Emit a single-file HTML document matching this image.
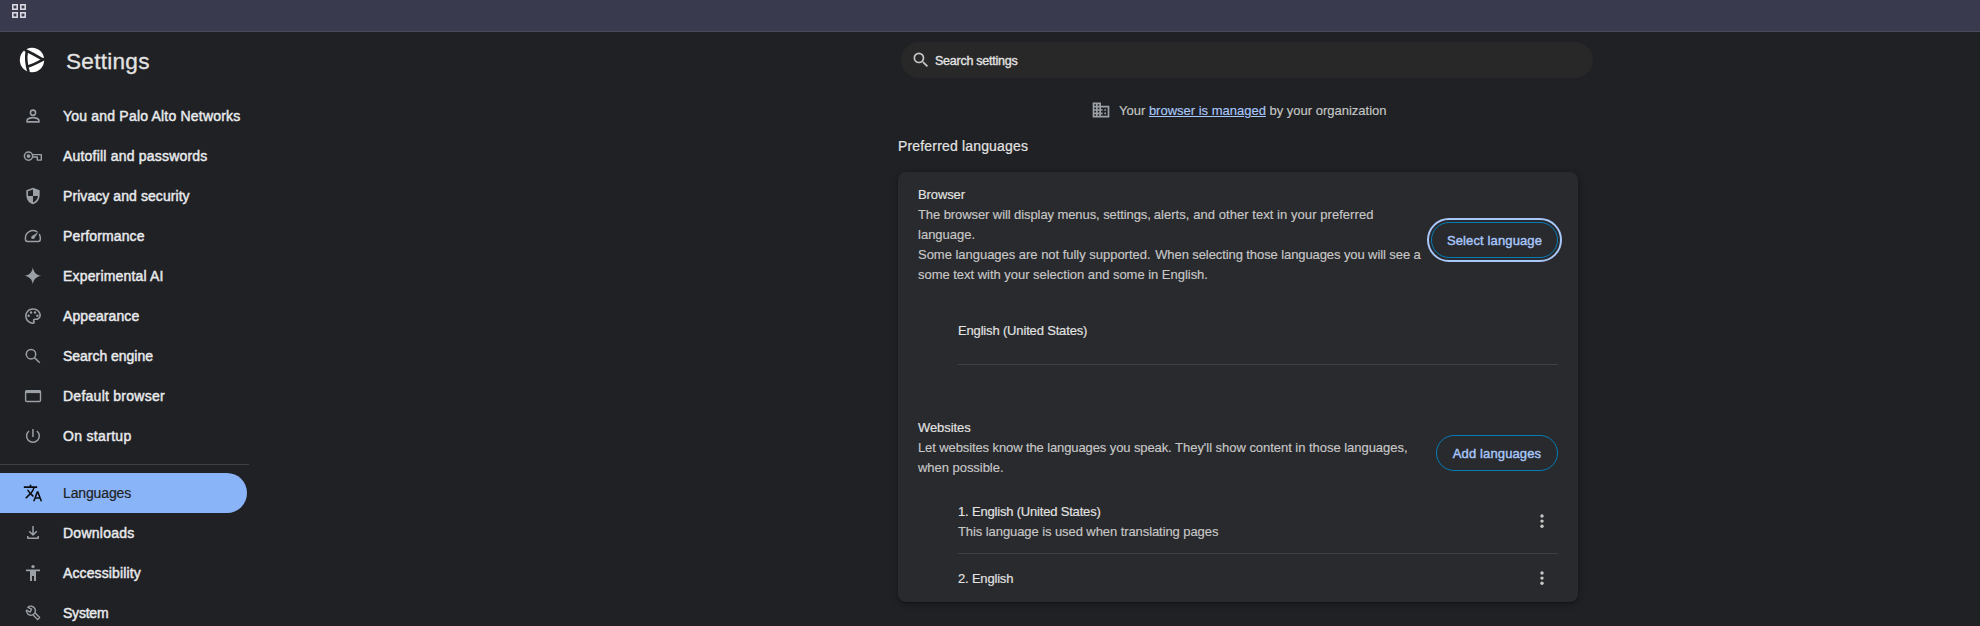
<!DOCTYPE html>
<html lang="en">
<head>
<meta charset="utf-8">
<title>Settings - Languages</title>
<style>
*{box-sizing:border-box;margin:0;padding:0}
html,body{width:1980px;height:626px;overflow:hidden;background:#202124}
body{position:relative;font-family:"Liberation Sans",sans-serif;font-size:13px;color:#e3e3e3;-webkit-font-smoothing:antialiased}
.abs{position:absolute}
.t{position:absolute;white-space:nowrap;line-height:20px;transform-origin:0 50%}
#topbar{left:0;top:0;width:1980px;height:32px;background:#3a3a4e;border-bottom:1px solid #4b4b58}
#toolbar h1{left:66px;top:46px;font-size:22.6px;line-height:32px;font-weight:400;color:#e3e3e3;-webkit-text-stroke:0.3px #e3e3e3}
.mi{position:absolute;left:0;width:247px;height:40px}
.mi svg{position:absolute;left:23px;top:10px;width:20px;height:20px;fill:#9aa0a6}
.mi span{position:absolute;left:63px;top:10px;line-height:20px;font-size:14px;font-weight:400;-webkit-text-stroke:0.45px #e8eaed;color:#e8eaed;white-space:nowrap}
.mi.sel{background:#8ab4f8;border-radius:0 20px 20px 0}
.mi.sel span{color:#202124;-webkit-text-stroke:0.2px #202124}
.mi.sel svg{fill:#0c0d10}
#sep{left:0;top:464px;width:249px;height:1px;background:#3c4043}
#search{left:901px;top:42px;width:692px;height:36px;border-radius:18px;background:#282828}
#search span{left:34px;top:9px;font-size:12.5px;font-weight:400;-webkit-text-stroke:0.35px #e3e3e3;color:#e3e3e3}
#managed{left:1119px;top:101px;color:#c4c7c5;font-size:13px;-webkit-text-stroke:0.15px}
#managed a{color:#a8c7fa;text-decoration:underline}
#pref{left:898px;top:136px;-webkit-text-stroke:0.2px #e3e3e3;font-size:14px;color:#e3e3e3}
#card{left:898px;top:172px;width:680px;height:430px;border-radius:8px;background:#292a2d;box-shadow:0 1px 2px 0 rgba(0,0,0,.3),0 2px 6px 2px rgba(0,0,0,.15)}
.c{color:#e3e3e3;-webkit-text-stroke:0.15px #e3e3e3}
.s{color:#c7c7c7;-webkit-text-stroke:0.15px #c7c7c7}
.hr{position:absolute;left:958px;width:600px;height:1px;background:#3f4042}
.btn{position:absolute;border:1px solid #047db7;border-radius:20px;color:#a8c7fa;font-weight:400;-webkit-text-stroke:0.4px #a8c7fa;font-size:13px;text-align:center;white-space:nowrap;letter-spacing:0.13px}
/*LS*/
#h1{letter-spacing:0.257px}
#m0{letter-spacing:0.201px}
#m1{letter-spacing:0.201px}
#m2{letter-spacing:0.071px}
#m3{letter-spacing:0.140px}
#m4{letter-spacing:0.169px}
#m5{letter-spacing:0.078px}
#m6{letter-spacing:-0.031px}
#m7{letter-spacing:0.257px}
#m8{letter-spacing:0.322px}
#m9{letter-spacing:-0.133px}
#m10{letter-spacing:0.248px}
#m11{letter-spacing:0.119px}
#m12{letter-spacing:-0.215px}
#stext{letter-spacing:-0.245px}
#managed{letter-spacing:-0.003px}
#pref{letter-spacing:0.170px}
#b1{letter-spacing:-0.113px}
#b2a{letter-spacing:-0.085px}
#b2b{letter-spacing:0.057px}
#b3{letter-spacing:0.008px}
#b4a{letter-spacing:-0.024px}
#b4b{letter-spacing:-0.090px}
#b5{letter-spacing:-0.026px}
#e1{letter-spacing:-0.163px}
#w1{letter-spacing:-0.079px}
#w2a{letter-spacing:-0.105px}
#w2b{letter-spacing:-0.034px}
#w3{letter-spacing:-0.036px}
#l1{letter-spacing:-0.185px}
#l2{letter-spacing:-0.079px}
#l3{letter-spacing:-0.189px}
/*LS*/
</style>
</head>
<body>
<div id="topbar" class="abs">
  <svg class="abs" style="left:11px;top:3px" width="16" height="16" viewBox="0 0 16 16" fill="none" stroke="#d9d7df" stroke-width="1.6">
    <rect x="1.8" y="1.8" width="4.4" height="4.4"/><rect x="9.8" y="1.8" width="4.4" height="4.4"/>
    <rect x="1.8" y="9.8" width="4.4" height="4.4"/><rect x="9.8" y="9.8" width="4.4" height="4.4"/>
  </svg>
</div>

<div id="toolbar">
  <svg class="abs" style="left:19px;top:47px" width="26" height="26" viewBox="0 0 26 26">
    <circle cx="13" cy="13" r="12.2" fill="#ffffff"/>
    <path d="M5.6 2.7 C11 5.2 17.5 8.8 22.3 11.7 L25.6 12.4 M25.2 12.1 C20 14.8 14 18 9 19.5 M7.700 5.000 C6.800 10 6.800 16 9.600 25.200" stroke="#202124" stroke-width="2.6" fill="none" stroke-linecap="butt"/>
  </svg>
  <h1 class="t" id="h1">Settings</h1>
</div>

<div id="menu">
  <div class="mi" style="top:96px"><svg viewBox="0 0 24 24"><path d="M12 4a4 4 0 1 0 0 8 4 4 0 0 0 0-8zm0 1.9a2.1 2.1 0 1 1 0 4.2 2.1 2.1 0 0 1 0-4.2zM12 13c-2.67 0-8 1.34-8 4v3h16v-3c0-2.66-5.33-4-8-4zm0 1.9c2.97 0 6.1 1.46 6.1 2.1v1.1H5.900V17c0-.64 3.130-2.100 6.100-2.100z"/></svg><span id="m0">You and Palo Alto Networks</span></div>
  <div class="mi" style="top:136px"><svg viewBox="0 0 20 20"><circle cx="5.5" cy="10.1" r="4.1" fill="none" stroke="#9aa0a6" stroke-width="1.5"/><circle cx="5.5" cy="10.1" r="1.9"/><path d="M9.400 8.600H18.300V14.100H14.300V11.000H9.400" fill="none" stroke="#9aa0a6" stroke-width="1.4" stroke-linejoin="round"/></svg><span id="m1">Autofill and passwords</span></div>
  <div class="mi" style="top:176px"><svg viewBox="0 0 24 24"><path d="M12 2 4 5v6.090c0 5.050 3.410 9.760 8 10.910 4.590-1.150 8-5.860 8-10.910V5l-8-3zm0 2.100v7.800h6c-.47 3.600-2.800 6.800-6 7.900V11.900H6V6.400l6-2.300z"/></svg><span id="m2">Privacy and security</span></div>
  <div class="mi" style="top:216px"><svg viewBox="0 0 20 20"><path d="M13.800 5.730A7.450 7.450 0 0 0 2.400 12.050V13.200Q2.400 15.400 4.600 15.400H15.100Q17.300 15.400 17.300 13.200V12.050A7.450 7.450 0 0 0 16.430 8.550" fill="none" stroke="#9aa0a6" stroke-width="1.45" stroke-linecap="round"/><circle cx="9.850" cy="11.400" r="1.600"/><path d="M8.700 10.300L15.700 5.700L11.000 12.600Z"/></svg><span id="m3">Performance</span></div>
  <div class="mi" style="top:256px"><svg viewBox="0 0 24 24"><path d="M12 1.700C12.700 7.600 16.400 11.300 22.300 12C16.400 12.700 12.700 16.400 12 22.300C11.300 16.400 7.600 12.700 1.700 12C7.600 11.300 11.300 7.600 12 1.700Z" transform="translate(-0.2 -0.3)"/></svg><span id="m4">Experimental AI</span></div>
  <div class="mi" style="top:296px"><svg viewBox="0 0 24 24"><g transform="translate(12 12.1) scale(.95) translate(-12 -12)"><path d="M12 2C6.490 2 2 6.490 2 12s4.490 10 10 10a2.500 2.500 0 0 0 2.500-2.500c0-.61-.23-1.200-.64-1.670a.528.528 0 0 1-.130-.330c0-.280.220-.500.500-.500H16c3.310 0 6-2.690 6-6 0-4.960-4.490-9-10-9zm4 13h-1.770a2.500 2.500 0 0 0-2.500 2.500c0 .61.220 1.190.630 1.650.06.07.140.190.140.350 0 .28-.22.500-.5.500-4.410 0-8-3.590-8-8s3.590-8 8-8 8 3.140 8 7c0 2.210-1.790 4-4 4z"/><circle cx="6.500" cy="11.500" r="1.500"/><circle cx="9.500" cy="7.500" r="1.500"/><circle cx="14.500" cy="7.500" r="1.500"/><circle cx="17.500" cy="11.500" r="1.500"/></g></svg><span id="m5">Appearance</span></div>
  <div class="mi" style="top:336px"><svg viewBox="0 0 20 20"><g fill="none" stroke="#9aa0a6" stroke-width="1.5"><circle cx="8" cy="8.200" r="4.700"/><path d="M11.400 11.600L16.700 16.700"/></g></svg><span id="m6">Search engine</span></div>
  <div class="mi" style="top:376px"><svg viewBox="0 0 20 20"><rect x="2.600" y="4.600" width="14.900" height="10.950" rx="1.200" fill="none" stroke="#9aa0a6" stroke-width="1.400"/><rect x="2.600" y="4.600" width="14.900" height="2.500"/></svg><span id="m7">Default browser</span></div>
  <div class="mi" style="top:416px"><svg viewBox="0 0 20 20"><g fill="none" stroke="#9aa0a6" stroke-width="1.500"><path d="M13.860 5.000A6.350 6.350 0 1 1 6.040 5.000"/><path d="M9.950 2.900V11.050"/></g></svg><span id="m8">On startup</span></div>
  <div id="sep" class="abs"></div>
  <div class="mi sel" style="top:473px"><svg viewBox="0 0 24 24"><path d="M12.870 15.070l-2.540-2.510.03-.03A17.520 17.520 0 0 0 14.070 6H17V4h-7V2H8v2H1v1.990h11.170C11.500 7.920 10.440 9.750 9 11.350 8.070 10.320 7.300 9.190 6.690 8h-2c.73 1.630 1.730 3.170 2.980 4.560l-5.090 5.020L4 19l5-5 3.110 3.110.76-2.040zM18.500 10h-2L12 22h2l1.120-3h4.750L21 22h2l-4.500-12zm-2.620 7l1.620-4.330L19.120 17h-3.240z"/></svg><span id="m9">Languages</span></div>
  <div class="mi" style="top:513px"><svg viewBox="0 0 20 20"><path d="M10 3V12 M6.200 8.200L10 12L13.800 8.200 M4.750 13V15.250H15.250V13" fill="none" stroke="#9aa0a6" stroke-width="1.5" stroke-linejoin="round"/></svg><span id="m10">Downloads</span></div>
  <div class="mi" style="top:553px"><svg viewBox="0 0 20 20"><circle cx="10" cy="3.600" r="1.700"/><path d="M3 6.600H17V8.200H13V18H11V13H9V18H7V8.200H3Z"/></svg><span id="m11">Accessibility</span></div>
  <div class="mi" style="top:593px"><svg viewBox="0 0 20 20"><g fill="none" stroke="#9aa0a6" stroke-width="1.4" stroke-linejoin="round"><path d="M4.850 4.340A4.500 4.500 0 1 1 3.410 7.180L7.150 9.070L8.590 6.230Z"/><path d="M11.940 9.670L16.630 14.580L14.580 16.630L9.890 11.720"/></g></svg><span id="m12">System</span></div>
</div>

<div id="search" class="abs">
  <svg class="abs" style="left:10px;top:8px" width="20" height="20" viewBox="0 0 24 24" fill="#c4c7c5"><path d="M15.500 14h-.79l-.28-.27A6.470 6.470 0 0 0 16 9.500 6.500 6.500 0 1 0 9.500 16c1.610 0 3.090-.59 4.230-1.570l.27.28v.79l5 4.990L20.490 19l-4.990-5zm-6 0C7.010 14 5 11.990 5 9.500S7.010 5 9.500 5 14 7.010 14 9.500 11.990 14 9.500 14z"/></svg>
  <span class="t" id="stext">Search settings</span>
</div>

<svg class="abs" style="left:1091px;top:100px" width="20" height="20" viewBox="0 0 24 24" fill="#9aa0a6"><path d="M12 7V3H2v18h20V7H12zM6 19H4v-2h2v2zm0-4H4v-2h2v2zm0-4H4V9h2v2zm0-4H4V5h2v2zm4 12H8v-2h2v2zm0-4H8v-2h2v2zm0-4H8V9h2v2zm0-4H8V5h2v2zm10 12h-8v-2h2v-2h-2v-2h2v-2h-2V9h8v10zm-2-8h-2v2h2v-2zm0 4h-2v2h2v-2z"/></svg>
<div class="t" id="managed">Your <a>browser is managed</a> by your organization</div>

<div class="t" id="pref">Preferred languages</div>

<div id="card" class="abs"></div>

<div class="t c" id="b1" style="left:918px;top:185px">Browser</div>
<div class="t s" id="b2a" style="left:918px;top:205px">The browser will display menus, settings,</div>
<div class="t s" id="b2b" style="left:1153.700px;top:205px">alerts, and other text in your preferred</div>
<div class="t s" id="b3" style="left:918px;top:225px">language.</div>
<div class="t s" id="b4a" style="left:918px;top:245px">Some languages are not fully supported.</div>
<div class="t s" id="b4b" style="left:1155.200px;top:245px">When selecting those languages you will see a</div>
<div class="t s" id="b5" style="left:918px;top:265px">some text with your selection and some in English.</div>
<div class="abs" style="left:1427px;top:218px;width:135px;height:44px;border:2px solid #a8c7fa;border-radius:22px"></div>
<div class="btn" id="btn1" style="left:1431px;top:222px;width:127px;height:36px;line-height:36px">Select language</div>

<div class="t c" id="e1" style="left:958px;top:321px">English (United States)</div>
<div class="hr" style="top:364px"></div>

<div class="t c" id="w1" style="left:918px;top:418px">Websites</div>
<div class="t s" id="w2a" style="left:918px;top:438px">Let websites know the languages you speak.</div>
<div class="t s" id="w2b" style="left:1175.100px;top:438px">They'll show content in those languages,</div>
<div class="t s" id="w3" style="left:918px;top:458px">when possible.</div>
<div class="btn" id="btn2" style="left:1436px;top:435px;width:122px;height:36px;line-height:36px">Add languages</div>

<div class="t c" id="l1" style="left:958px;top:502px">1. English (United States)</div>
<div class="t s" id="l2" style="left:958px;top:522px">This language is used when translating pages</div>
<svg class="abs" style="left:1538.800px;top:513.800px" width="6" height="16" fill="#c4c7c5"><circle cx="3" cy="2" r="1.700"/><circle cx="3" cy="7.100" r="1.700"/><circle cx="3" cy="12.200" r="1.700"/></svg>
<div class="hr" style="top:553px"></div>
<div class="t c" id="l3" style="left:958px;top:569px">2. English</div>
<svg class="abs" style="left:1538.800px;top:571.000px" width="6" height="16" fill="#c4c7c5"><circle cx="3" cy="2" r="1.700"/><circle cx="3" cy="7.100" r="1.700"/><circle cx="3" cy="12.200" r="1.700"/></svg>

</body>
</html>
